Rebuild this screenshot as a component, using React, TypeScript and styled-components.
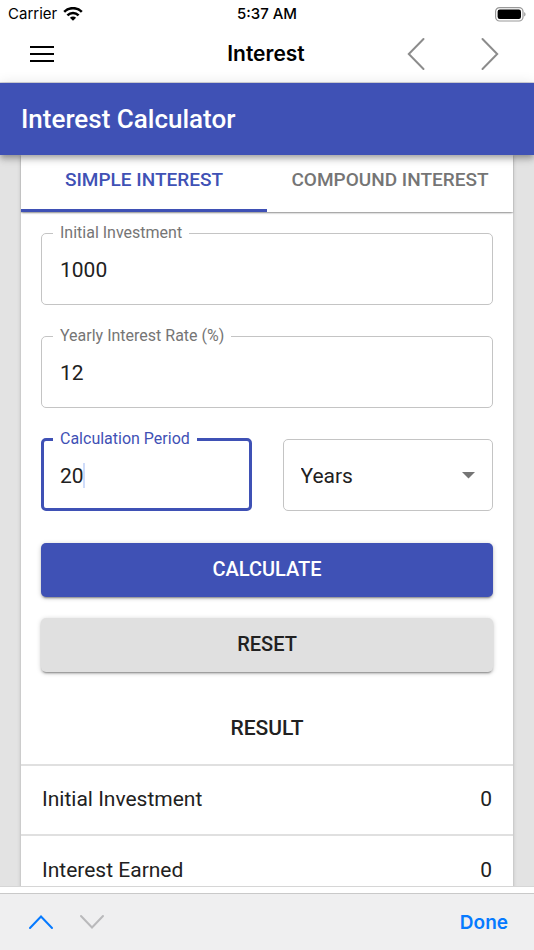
import React, { useState } from "react";
import styled, { createGlobalStyle, css } from "styled-components";

const blue = "#3f51b5";
const ink = "#212121";
const muted = "#757575";
const outline = "#c4c4c4";
const divider = "#e0e0e0";
const ios = `Inter, "Liberation Sans", sans-serif`;

const GlobalStyle = createGlobalStyle`
  *, *::before, *::after { box-sizing: border-box; }
  body {
    margin: 0;
    background: #fff;
    color: ${ink};
    font-family: Roboto, "Liberation Sans", sans-serif;
  }
  button, input, select { font-family: inherit; }
`;

const Screen = styled.div`
  height: 100vh;
  display: flex;
  flex-direction: column;
`;

const StatusBar = styled.div`
  flex: none;
  display: grid;
  grid-template-columns: 1fr auto 1fr;
  align-items: center;
  height: 28px;
  padding: 0 8px;
  color: #000;
  font-family: ${ios};
  font-size: 15px;
  line-height: 20px;
`;

const Carrier = styled.div`
  display: flex;
  align-items: center;
  gap: 6px;
`;

const Clock = styled.time`
  font-weight: 500;
`;

const Battery = styled.svg`
  justify-self: end;
`;

const NavBar = styled.header`
  flex: none;
  display: grid;
  grid-template-columns: 1fr auto 1fr;
  align-items: center;
  height: 55px;
  padding: 0 28px 2px 26px;
  border-bottom: 1px solid #d5d5dc;
  color: #000;
  font-family: ${ios};
`;

const NavTitle = styled.h1`
  margin: 0;
  font-size: 21px;
  line-height: 28px;
  font-weight: 600;
`;

const NavArrows = styled.div`
  display: flex;
  justify-content: flex-end;
  gap: 42px;
`;

const IconButton = styled.button`
  display: flex;
  align-items: center;
  justify-content: center;
  justify-self: start;
  width: 32px;
  height: 40px;
  padding: 0;
  border: 0;
  background: none;
  cursor: pointer;
`;

const AppBar = styled.div`
  flex: none;
  position: relative;
  z-index: 1;
  display: flex;
  align-items: center;
  height: 72px;
  padding: 0 21px;
  background: ${blue};
  color: #fff;
  box-shadow: 0 3px 5px -1px rgba(0, 0, 0, 0.2), 0 5px 6px rgba(0, 0, 0, 0.14),
    0 1px 13px rgba(0, 0, 0, 0.12);
`;

const AppTitle = styled.h2`
  margin: 0;
  font-size: 26px;
  line-height: 40px;
  font-weight: 500;
`;

const Content = styled.main`
  flex: 1;
  min-height: 0;
  overflow: hidden;
  padding: 0 21px;
  background: #e3e3e3;
`;

const Card = styled.div`
  min-height: 100%;
  background: #fff;
  box-shadow: 0 3px 2px -2px rgba(0, 0, 0, 0.2), 0 1px 1px rgba(0, 0, 0, 0.14),
    0 1px 4px rgba(0, 0, 0, 0.2);
`;

const Tabs = styled.div`
  display: grid;
  grid-template-columns: 1fr 1fr;
  box-shadow: 0 2px 2px -1px rgba(0, 0, 0, 0.3), 0 1px 1px rgba(0, 0, 0, 0.16);
`;

const Tab = styled.button<{ $active: boolean }>`
  height: 57px;
  padding: 0 0 4px;
  border: 0;
  border-bottom: 3px solid ${(p) => (p.$active ? blue : "transparent")};
  background: none;
  color: ${(p) => (p.$active ? blue : muted)};
  font-size: 19px;
  font-weight: 500;
  line-height: 24px;
  white-space: nowrap;
  cursor: pointer;
`;

const Form = styled.form`
  display: flex;
  flex-direction: column;
  gap: 22px;
  padding: 12px 20px 0;
`;

const FieldRow = styled.div`
  display: grid;
  grid-template-columns: 1fr 1fr;
  align-items: end;
  gap: 31px;
`;

const Outline = styled.fieldset<{ $focused: boolean }>`
  position: relative;
  min-width: 0;
  height: 81px;
  margin: 0;
  border: ${(p) => (p.$focused ? `3px solid ${blue}` : `1px solid ${outline}`)};
  border-radius: 5px;
  padding: 0 ${(p) => (p.$focused ? "9px" : "11px")};
  color: ${(p) => (p.$focused ? blue : muted)};
`;

const Legend = styled.legend`
  padding: 0 7px;
  font-size: 16px;
  line-height: 18px;
`;

const fieldText = css`
  color: ${ink};
  font-size: 21px;
  line-height: 28px;
`;

const TextInput = styled.input`
  display: block;
  width: 100%;
  height: 56px;
  padding: 0 7px;
  border: 0;
  outline: 0;
  background: none;
  caret-color: transparent;
  ${fieldText}
`;

const Caret = styled.span`
  position: absolute;
  left: calc(15px + 2ch);
  top: 15px;
  width: 2px;
  height: 25px;
  background: #cfdcfa;
  font-size: 21px;
`;

const SelectBox = styled.div`
  display: grid;
  align-items: center;
  height: 72px;
  border: 1px solid ${outline};
  border-radius: 5px;

  > * {
    grid-area: 1 / 1;
  }
  > svg {
    justify-self: end;
    margin-right: 17px;
    pointer-events: none;
  }
`;

const Select = styled.select`
  appearance: none;
  width: 100%;
  height: 100%;
  padding: 2px 42px 0 17px;
  border: 0;
  outline: 0;
  background: none;
  ${fieldText}
`;

const Actions = styled.div`
  display: grid;
  gap: 21px;
  padding-top: 10px;
`;

const ActionButton = styled.button<{ $primary?: boolean }>`
  height: 54px;
  padding: 0 0 2px;
  border: 0;
  border-radius: 5px;
  background: ${(p) => (p.$primary ? blue : divider)};
  color: ${(p) => (p.$primary ? "#fff" : ink)};
  font-size: 20px;
  font-weight: 500;
  line-height: 28px;
  box-shadow: 0 3px 1px -2px rgba(0, 0, 0, 0.2), 0 2px 2px rgba(0, 0, 0, 0.14),
    0 1px 5px rgba(0, 0, 0, 0.2);
  cursor: pointer;
`;

const Results = styled.table`
  width: 100%;
  margin-top: 18px;
  border-collapse: collapse;

  caption {
    padding: 24px 0 22px;
    font-weight: 500;
    ${fieldText}
  }
  th,
  td {
    height: 70px;
    padding: 0 21px 2px;
    border-top: 2px solid ${divider};
    font-weight: 400;
    text-align: left;
    ${fieldText}
  }
  td {
    text-align: right;
  }
`;

const Accessory = styled.footer`
  flex: none;
  border-top: 1px solid #d6d6d6;
  padding-top: 6px;
  background: #fff;
`;

const AccessoryBar = styled.div`
  display: flex;
  align-items: center;
  gap: 19px;
  height: 57px;
  padding: 0 26px 0 25px;
  border-top: 1px solid #c9c9c9;
  background: #efeff0;
`;

const DoneButton = styled.button`
  margin-left: auto;
  padding: 2px 0 0;
  border: 0;
  background: none;
  color: #067aff;
  && {
    font-family: ${ios};
  }
  font-size: 19px;
  font-weight: 600;
  line-height: 28px;
  cursor: pointer;
`;

const WifiIcon = () => (
  <svg width="20" height="15" viewBox="0 0 20 15" fill="none" stroke="#000" strokeWidth="2.5" aria-hidden="true">
    <path d="M1.2 4.8C6 -.1 14 -.1 18.8 4.8" />
    <path d="M4.4 8.3C7.6 5.1 12.4 5.1 15.6 8.3" />
    <path d="M10 13.8 6.9 10.8C8.6 9.1 11.4 9.1 13.1 10.8Z" fill="#000" stroke="none" />
  </svg>
);

const Chevron = ({ d, w, h, color, stroke }: { d: string; w: number; h: number; color: string; stroke: number }) => (
  <svg width={w} height={h} viewBox={`0 0 ${w} ${h}`} fill="none" stroke={color} strokeWidth={stroke} strokeLinecap="round" strokeLinejoin="miter" aria-hidden="true">
    <path d={d} />
  </svg>
);

type FieldProps = {
  id: string;
  label: string;
  value: string;
  focused?: boolean;
  onChange: (value: string) => void;
};

const Field = ({ id, label, value, focused = false, onChange }: FieldProps) => (
  <Outline $focused={focused}>
    <Legend>
      <label htmlFor={id}>{label}</label>
    </Legend>
    <TextInput id={id} inputMode="decimal" value={value} onChange={(e) => onChange(e.target.value)} />
    {focused && <Caret />}
  </Outline>
);

export default function App() {
  const [tab, setTab] = useState(0);
  const [amount, setAmount] = useState("1000");
  const [rate, setRate] = useState("12");
  const [period, setPeriod] = useState("20");

  const reset = () => {
    setAmount("");
    setRate("");
    setPeriod("");
  };

  return (
    <Screen>
      <GlobalStyle />
      <StatusBar>
        <Carrier>
          <span>Carrier</span>
          <WifiIcon />
        </Carrier>
        <Clock>5:37 AM</Clock>
        <Battery width="32" height="15" viewBox="0 0 32 15" aria-hidden="true">
          <rect x="1.6" y="0.6" width="27.4" height="13.4" rx="4" fill="none" stroke="#999" strokeWidth="1.2" />
          <rect x="3.6" y="2.6" width="23.4" height="9.4" rx="2.2" fill="#000" />
          <path d="M30.2 5C32 5.9 32 8.7 30.2 9.6Z" fill="#999" />
        </Battery>
      </StatusBar>

      <NavBar>
        <IconButton type="button" aria-label="Menu">
          <svg width="24" height="18" viewBox="0 0 24 18" stroke="#000" strokeWidth="2.2" aria-hidden="true">
            <path d="M0 2H24M0 9H24M0 16H24" />
          </svg>
        </IconButton>
        <NavTitle>Interest</NavTitle>
        <NavArrows>
          <IconButton type="button" aria-label="Back">
            <Chevron w={18} h={34} d="M16.5 2 1.8 17 16.5 32" color="#8c8c8c" stroke={2} />
          </IconButton>
          <IconButton type="button" aria-label="Forward">
            <Chevron w={18} h={34} d="M1.5 2 16.2 17 1.5 32" color="#8c8c8c" stroke={2} />
          </IconButton>
        </NavArrows>
      </NavBar>

      <AppBar>
        <AppTitle>Interest Calculator</AppTitle>
      </AppBar>

      <Content>
        <Card>
          <Tabs role="tablist">
            {["SIMPLE INTEREST", "COMPOUND INTEREST"].map((name, i) => (
              <Tab key={name} type="button" role="tab" aria-selected={tab === i} $active={tab === i} onClick={() => setTab(i)}>
                {name}
              </Tab>
            ))}
          </Tabs>
          <Form onSubmit={(e) => e.preventDefault()}>
            <Field id="amount" label="Initial Investment" value={amount} onChange={setAmount} />
            <Field id="rate" label="Yearly Interest Rate (%)" value={rate} onChange={setRate} />
            <FieldRow>
              <Field id="period" label="Calculation Period" value={period} onChange={setPeriod} focused />
              <SelectBox>
                <Select aria-label="Period unit" defaultValue="Years">
                  <option>Years</option>
                  <option>Months</option>
                </Select>
                <svg width="13" height="7" viewBox="0 0 13 7" aria-hidden="true">
                  <path d="M0 0H13L6.5 6.5Z" fill={muted} />
                </svg>
              </SelectBox>
            </FieldRow>
            <Actions>
              <ActionButton type="submit" $primary>
                CALCULATE
              </ActionButton>
              <ActionButton type="button" onClick={reset}>
                RESET
              </ActionButton>
            </Actions>
          </Form>
          <Results>
            <caption>RESULT</caption>
            <tbody>
              <tr>
                <th scope="row">Initial Investment</th>
                <td>0</td>
              </tr>
              <tr>
                <th scope="row">Interest Earned</th>
                <td>0</td>
              </tr>
            </tbody>
          </Results>
        </Card>
      </Content>

      <Accessory>
        <AccessoryBar>
          <IconButton type="button" aria-label="Previous field">
            <Chevron w={26} h={16} d="M2 14 13 2.5 24 14" color="#067aff" stroke={2} />
          </IconButton>
          <IconButton type="button" aria-label="Next field">
            <Chevron w={26} h={16} d="M2 2 13 13.5 24 2" color="#b9b9bb" stroke={2} />
          </IconButton>
          <DoneButton type="button">Done</DoneButton>
        </AccessoryBar>
      </Accessory>
    </Screen>
  );
}
